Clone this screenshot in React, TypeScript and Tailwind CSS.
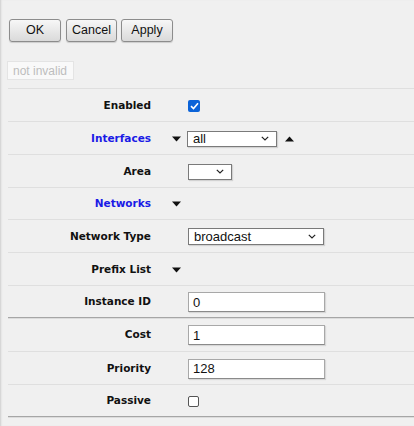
import React from "react";

const Down = () => (
  <svg width="9" height="6" viewBox="0 0 9 6" className="block">
    <path d="M0 0.5 H9 L4.5 5.5 Z" fill="#111" />
  </svg>
);
const Up = () => (
  <svg width="9" height="6" viewBox="0 0 9 6" className="block">
    <path d="M0 5.5 H9 L4.5 0.5 Z" fill="#111" />
  </svg>
);
const Chev = () => (
  <svg width="8" height="5" viewBox="0 0 8 5" className="block">
    <path d="M0.8 0.8 L4 4 L7.2 0.8" fill="none" stroke="#222" strokeWidth="1.2" />
  </svg>
);

const Select = ({ w, value }: { w: string; value: string }) => (
  <div
    className={`${w} h-[16px] bg-white border border-[#7a7a7a] shadow-[1px_1px_1px_rgba(0,0,0,0.12)] flex items-center justify-between pl-[5px] pr-[7px] text-[13px] leading-none text-[#111] font-['Liberation_Sans',sans-serif]`}
  >
    <span>{value}</span>
    <Chev />
  </div>
);

const Input = ({ value }: { value: string }) => (
  <div className="w-[137px] h-[20px] bg-white border border-[#a8a8a8] border-b-[#8a8a8a] shadow-[1px_1px_1px_rgba(0,0,0,0.1)] flex items-center pl-[4px] text-[13px] leading-none text-[#111] font-['Liberation_Sans',sans-serif]">
    {value}
  </div>
);

const Row = ({
  label,
  blue,
  h,
  dark,
  arrow,
  children,
}: {
  label: string;
  blue?: boolean;
  h: string;
  dark?: boolean;
  arrow?: boolean;
  children?: React.ReactNode;
}) => (
  <div
    className={`${h} flex items-center ${
      dark
        ? "border-b border-[#a6a6a6] shadow-[0_1px_0_#dcdcdc]"
        : "border-b border-[#dfdfdf]"
    }`}
  >
    <div
      className={`w-[143px] pt-[1px] text-right font-bold text-[10.5px] ${
        blue ? "text-[#1a1ae6]" : "text-[#111]"
      }`}
    >
      {label}
    </div>
    {arrow ? (
      <div className="flex items-center pt-[1px]">
        <div className="ml-[21px] w-[9px]">
          <Down />
        </div>
        <div className="ml-[6px] flex items-center">{children}</div>
      </div>
    ) : (
      <div className="ml-[37px] flex items-center pt-[1px]">{children}</div>
    )}
  </div>
);

export default function App() {
  return (
    <div className="min-h-[426px] w-[414px] bg-[#f0f0f0] shadow-[inset_2px_0_2px_-1px_#cfcfcf] font-['DejaVu_Sans',sans-serif] overflow-hidden">
      <div className="flex pl-[9px] pt-[19px] font-['Liberation_Sans',sans-serif] text-[12.5px] text-[#111]">
        <button className="w-[52px] h-[23px] rounded-[3px] border border-[#8c8c8c] bg-gradient-to-b from-[#f7f7f7] to-[#dadada] shadow-[0_1px_1px_rgba(0,0,0,0.15)]">
          OK
        </button>
        <button className="ml-[5px] w-[51px] h-[23px] rounded-[3px] border border-[#8c8c8c] bg-gradient-to-b from-[#f7f7f7] to-[#dadada] shadow-[0_1px_1px_rgba(0,0,0,0.15)]">
          Cancel
        </button>
        <button className="ml-[4px] w-[52px] h-[23px] rounded-[3px] border border-[#8c8c8c] bg-gradient-to-b from-[#f7f7f7] to-[#dadada] shadow-[0_1px_1px_rgba(0,0,0,0.15)]">
          Apply
        </button>
      </div>
      <div className="pl-[7px] pt-[19px]">
        <div className="w-[67px] h-[19px] bg-[#f9f9f9] border border-[#e4e4e4] flex items-center pl-[5px] text-[12px] whitespace-nowrap overflow-hidden text-[#bdbdbd] font-['Liberation_Sans',sans-serif]">
          not invalid
        </div>
      </div>
      <div className="ml-[8px] mt-[8px] border-t border-[#dfdfdf]">
        <Row label="Enabled" h="h-[33px]">
          <div className="w-[12px] h-[12px] rounded-[2px] bg-[#0b63d8] flex items-center justify-center">
            <svg width="9" height="8" viewBox="0 0 9 8">
              <path d="M1 4.2 L3.5 6.5 L8 1.3" fill="none" stroke="#fff" strokeWidth="1.6" />
            </svg>
          </div>
        </Row>
        <Row label="Interfaces" blue arrow h="h-[33px]">
          <Select w="w-[90px]" value="all" />
          <div className="ml-[8px]">
            <Up />
          </div>
        </Row>
        <Row label="Area" h="h-[33px]">
          <Select w="w-[44px]" value="" />
        </Row>
        <Row label="Networks" blue arrow h="h-[32px]" />
        <Row label="Network Type" h="h-[33px]">
          <Select w="w-[136px] h-[17px]" value="broadcast" />
        </Row>
        <Row label="Prefix List" arrow h="h-[33px]" />
        <Row label="Instance ID" dark h="h-[32px]">
          <Input value="0" />
        </Row>
        <Row label="Cost" h="h-[34px]">
          <Input value="1" />
        </Row>
        <Row label="Priority" h="h-[33px]">
          <Input value="128" />
        </Row>
        <Row label="Passive" dark h="h-[32px]">
          <div className="w-[11px] h-[11px] rounded-[2px] bg-white border border-[#555]" />
        </Row>
      </div>
    </div>
  );
}
